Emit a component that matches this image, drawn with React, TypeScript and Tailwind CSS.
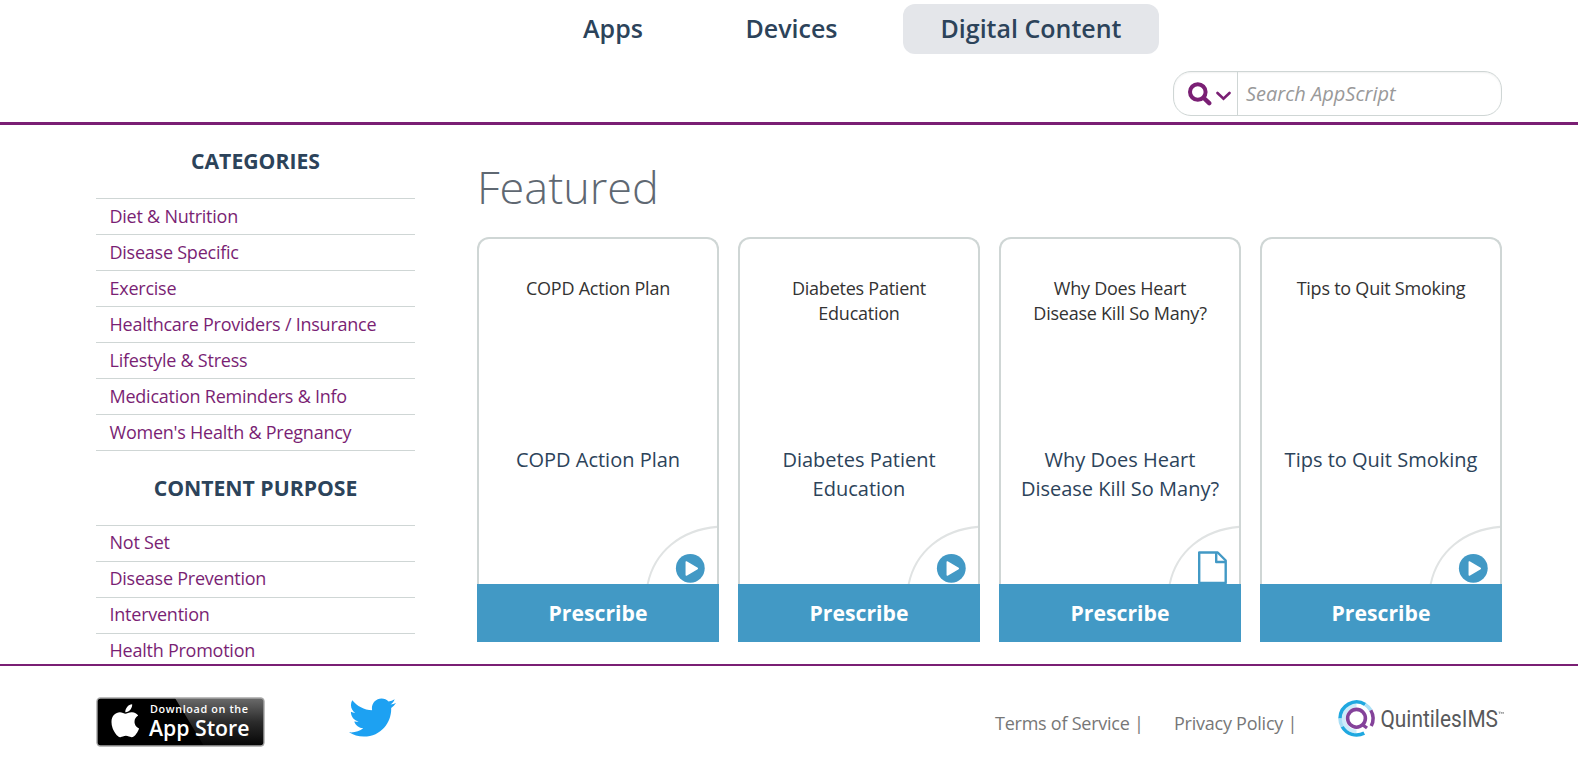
import { FaApple, FaTwitter } from "react-icons/fa";

const categories = [
  "Diet & Nutrition",
  "Disease Specific",
  "Exercise",
  "Healthcare Providers / Insurance",
  "Lifestyle & Stress",
  "Medication Reminders & Info",
  "Women's Health & Pregnancy",
];
const purposes = ["Not Set", "Disease Prevention", "Intervention", "Health Promotion"];

type Item = { title: string; kind: "video" | "document" };
const items: Item[] = [
  { title: "COPD Action Plan", kind: "video" },
  { title: "Diabetes Patient Education", kind: "video" },
  { title: "Why Does Heart Disease Kill So Many?", kind: "document" },
  { title: "Tips to Quit Smoking", kind: "video" },
];

function FilterList({ title, entries, tight = false }: { title: string; entries: string[]; tight?: boolean }) {
  return (
    <section>
      <h2
        className={`${tight ? "h-[74px] pt-[22px]" : "h-[75px] pt-[23px]"} text-center text-[21.2px] leading-[30px] font-bold text-[#2c435a]`}
      >
        {title}
      </h2>
      <ul className="border-t border-[#cfd6d5]">
        {entries.map((e) => (
          <li
            key={e}
            className={`${tight ? "leading-[33px]" : "leading-[35px]"} h-9 border-b border-[#cfd6d5] pl-[13.5px] text-[18px] tracking-[-0.24px] text-[#7a1f74]`}
          >
            {e}
          </li>
        ))}
      </ul>
    </section>
  );
}

function TypeBadge({ kind }: { kind: Item["kind"] }) {
  return (
    <svg className="absolute right-0 bottom-0" width="72" height="60" viewBox="0 0 72 60" fill="none">
      <path d="M2.5 61C9 28 36 5.500 73 2.800" stroke="#e0e3e3" strokeWidth="2" />
      {kind === "video" ? (
        <g>
          <circle cx="45.3" cy="44.3" r="14.4" fill="#4299c5" />
          <path d="M41.300 38v13l11-6.500z" fill="#fff" stroke="#fff" strokeWidth="1.500" strokeLinejoin="round" />
        </g>
      ) : (
        <g stroke="#4299c5" strokeWidth="2.400" strokeLinejoin="round">
          <path d="M32.200 28.500h18.500l8 8V59H32.200z" />
          <path d="M49.200 28.500v9.500h9.500" />
        </g>
      )}
    </svg>
  );
}

function Card({ item }: { item: Item }) {
  return (
    <article className="w-[242px]">
      <div className="relative h-[347px] rounded-t-xl border-2 border-b-0 border-[#cfd6d5] text-center">
        <p className="h-[166px] px-8 pt-[37px] text-[18px] leading-[25px] tracking-[-0.24px] text-[#333]">{item.title}</p>
        <h3 className="px-4 pt-[40px] text-[20px] leading-[29px] text-[#2c435a]">{item.title}</h3>
        <TypeBadge kind={item.kind} />
      </div>
      <button className="block h-[58px] w-full bg-[#4299c5] pb-px text-[21.2px] font-bold text-white">Prescribe</button>
    </article>
  );
}

function StoreBadge() {
  return (
    <svg width="169" height="50" viewBox="0 0 169 50">
      <defs>
        <linearGradient id="gloss" x1="0" y1="0" x2="0" y2="1">
          <stop offset="0" stopColor="#6b6b6b" />
          <stop offset="0.5" stopColor="#2b2b2b" />
          <stop offset="1" stopColor="#050505" />
        </linearGradient>
      </defs>
      <rect x="1" y="1" width="167" height="48" rx="3.5" fill="#000" />
      <path d="M79 1h86a3 3 0 0 1 3 3v42a3 3 0 0 1-3 3h-57z" fill="url(#gloss)" />
      <rect x="1" y="1" width="167" height="48" rx="3.5" fill="none" stroke="#a6a6a6" strokeWidth="1.4" />
      <FaApple x="10.500" y="5" size={37.5} color="#fff" />
      <text x="54" y="16" fill="#fff" fontSize="10.8" fontWeight="600" textLength="98">Download on the</text>
      <text x="53" y="39" fill="#fff" fontSize="21.5" fontWeight="600" textLength="100.5" lengthAdjust="spacingAndGlyphs">App Store</text>
    </svg>
  );
}

function QuintilesLogo() {
  return (
    <svg width="170" height="42" viewBox="0 0 170 42" fill="none">
      <path d="M19.5 7.5A13 13 0 0 0 6.5 20.5A13 13 0 0 0 19.5 33.5" stroke="#cdecfa" strokeWidth="4" />
      <path d="M28.2 6.5A16.5 16.5 0 0 0 3 20.5" stroke="#1fa8e0" strokeWidth="3.5" />
      <path d="M3 20.5a16.5 16.5 0 0 0 2.2 8.25" stroke="#a9dff6" strokeWidth="3.5" />
      <path d="M5.2 28.75A16.5 16.5 0 0 0 27.2 35.1" stroke="#1fa8e0" strokeWidth="3.5" />
      <path d="M28.2 6.5a16.5 16.5 0 0 1 5.6 5.75" stroke="#a9dff6" strokeWidth="3.5" />
      <path d="M33.8 12.25A16.5 16.5 0 0 1 34.2 28" stroke="#84429a" strokeWidth="3.5" />
      <circle cx="19.5" cy="20.3" r="8.9" stroke="#84429a" strokeWidth="3.6" />
      <path d="M24.5 26l5.5 4" stroke="#84429a" strokeWidth="3.4" />
      <text x="43.5" y="28.5" fill="#58595b" fontFamily="Roboto" fontSize="23" textLength="117.500" lengthAdjust="spacingAndGlyphs">QuintilesIMS</text>
      <path d="M161.500 14h2.200m-1.100 0v2M164.400 16v-2l1 1.300l1-1.300v2" stroke="#77787a" strokeWidth="0.6" />
    </svg>
  );
}

export default function App() {
  return (
    <div className="flex h-[763px] flex-col overflow-hidden bg-white font-['Open_Sans',sans-serif]">
      <header className="h-[125px] shrink-0 border-b-3 border-[#7a1f74] pt-1">
        <nav className="flex h-[50px] pl-[546px] text-[25px] leading-[48px] font-semibold text-[#2c435a]">
          <a className="w-[134px] text-center">Apps</a>
          <a className="w-[223px] text-center">Devices</a>
          <a className="w-[256px] rounded-xl bg-[#e4e6ea] text-center">Digital Content</a>
        </nav>
        <div className="mt-[17px] ml-[1173px] flex h-[45px] w-[329px] items-center overflow-hidden rounded-[18px] border border-[#cfd6d5] shadow-[inset_0_1px_2px_rgba(0,0,0,0.06)]">
          <div className="flex h-full w-16 items-center gap-1 border-r border-[#cfd6d5] pl-3.5 text-[#7a1f74]">
            <svg width="24" height="24" viewBox="0 0 24 24" fill="none" stroke="currentColor">
              <circle cx="9.8" cy="10" r="7.8" strokeWidth="4" />
              <path d="M15.800 16l5.400 5.200" strokeWidth="4.400" strokeLinecap="round" />
            </svg>
            <svg className="mt-1" width="15" height="10" viewBox="0 0 15 10" fill="none" stroke="currentColor" strokeWidth="2.6">
              <path d="M1.500 2L7.500 7.800L13.500 2" strokeLinecap="round" />
            </svg>
          </div>
          <span className="pl-2 text-[20px] text-[#999] italic">Search AppScript</span>
        </div>
      </header>
      <main className="flex h-[539px] shrink-0 overflow-hidden pl-24">
        <aside className="-mt-0.5 w-[319px] shrink-0">
          <FilterList title="CATEGORIES" entries={categories} />
          <FilterList title="CONTENT PURPOSE" entries={purposes} tight />
        </aside>
        <section className="ml-[62px]">
          <h1 className="h-[112px] pt-[29px] text-[45px] leading-[66px] font-light text-[#5f6872]">Featured</h1>
          <div className="flex gap-[19px]">
            {items.map((i) => (
              <Card key={i.title} item={i} />
            ))}
          </div>
        </section>
      </main>
      <footer className="flex h-[99px] shrink-0 border-t-2 border-[#7a1f74] pl-24 text-[18px] tracking-[-0.24px] text-[#777]">
        <div className="w-[253px] pt-[31px] tracking-normal"><StoreBadge /></div>
        <div className="w-[646px] pt-[28px]"><FaTwitter className="size-[47px] text-[#1da1f2]" /></div>
        <span className="w-[179px] pt-[43.5px]">Terms of Service |</span>
        <span className="w-[163px] pt-[43.5px]">Privacy Policy |</span>
        <div className="pt-8 tracking-normal"><QuintilesLogo /></div>
      </footer>
    </div>
  );
}
